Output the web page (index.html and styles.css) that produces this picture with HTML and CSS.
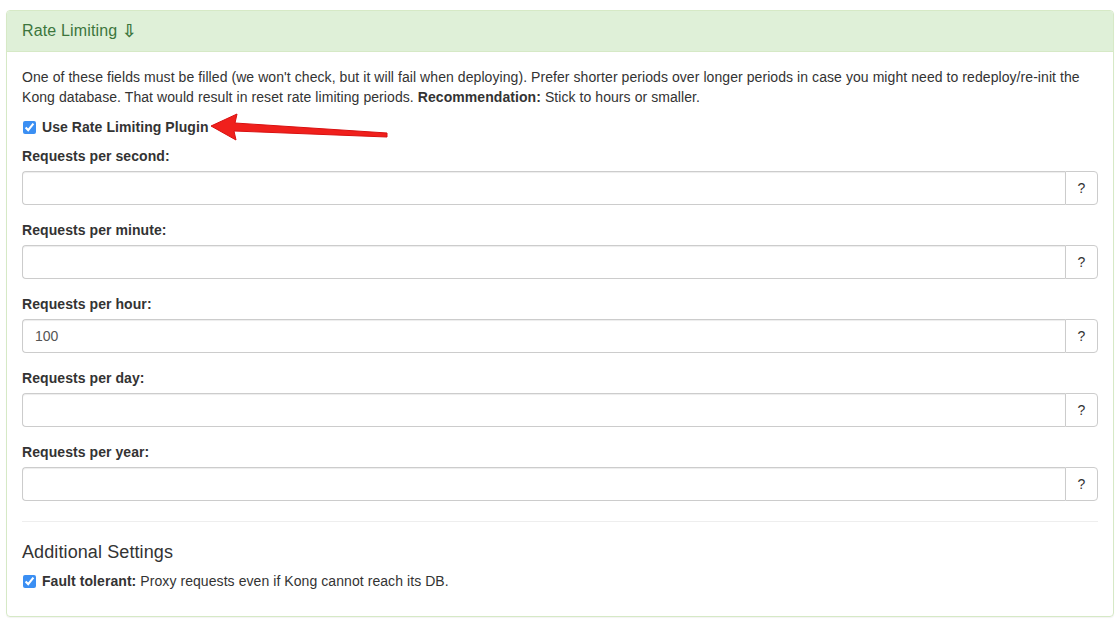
FILE: index.html
```html
<!DOCTYPE html>
<html>
<head>
<meta charset="utf-8">
<link rel="stylesheet" href="styles.css">
</head>
<body>
<div class="page">
  <div class="panel">
    <div class="panel-heading">Rate Limiting <span class="glyph">⇩</span></div>
    <div class="panel-body">
      <p class="intro">One of these fields must be filled (we won't check, but it will fail when deploying). Prefer shorter periods over longer periods in case you might need to redeploy/re-init the Kong database. That would result in reset rate limiting periods. <b>Recommendation:</b> Stick to hours or smaller.</p>
      <div class="checkbox first-check">
        <label><input type="checkbox" checked> <b>Use Rate Limiting Plugin</b></label>
        <svg class="arrow" width="200" height="40" viewBox="0 0 200 40">
          <path d="M2 14 L28 2 L26 11 L178 21 L178 25 L25 19 L27 28 Z" fill="#f0201c" stroke="#d81010" stroke-width="1" stroke-linejoin="round"/>
        </svg>
      </div>
      <div class="form-group">
        <label class="lbl">Requests per second:</label>
        <div class="input-group"><input class="form-control" type="text"><span class="addon">?</span></div>
      </div>
      <div class="form-group">
        <label class="lbl">Requests per minute:</label>
        <div class="input-group"><input class="form-control" type="text"><span class="addon">?</span></div>
      </div>
      <div class="form-group">
        <label class="lbl">Requests per hour:</label>
        <div class="input-group"><input class="form-control" type="text" value="100"><span class="addon">?</span></div>
      </div>
      <div class="form-group">
        <label class="lbl">Requests per day:</label>
        <div class="input-group"><input class="form-control" type="text"><span class="addon">?</span></div>
      </div>
      <div class="form-group">
        <label class="lbl">Requests per year:</label>
        <div class="input-group"><input class="form-control" type="text"><span class="addon">?</span></div>
      </div>
      <hr>
      <h4>Additional Settings</h4>
      <div class="checkbox last-check">
        <label><input type="checkbox" checked> <b>Fault tolerant:</b> Proxy requests even if Kong cannot reach its DB.</label>
      </div>
    </div>
  </div>
</div>
</body>
</html>
```

FILE: styles.css
```css
* { box-sizing: border-box; }
html, body { margin: 0; padding: 0; background: #fff; }
body {
  font-family: "Liberation Sans", Arial, sans-serif;
  font-size: 14px;
  line-height: 20px;
  color: #333;
  letter-spacing: 0.07px;
}
.page { padding: 10px 5px 6px 6px; }
.panel {
  border: 1px solid #d6e9c6;
  border-radius: 4px;
  box-shadow: 0 1px 1px rgba(0,0,0,0.05);
}
.panel-heading {
  background: #dff0d8;
  color: #3c763d;
  border-bottom: 1px solid #d6e9c6;
  border-radius: 3px 3px 0 0;
  padding: 10px 15px;
  font-size: 16px;
  line-height: 20px;
  height: 41px;
  letter-spacing: 0.15px;
}
.glyph { font-family: "DejaVu Sans", sans-serif; font-size: 18px; font-weight: bold; vertical-align: -1px; }
.panel-body { padding: 15px; }
.intro { margin: 0 0 10px; }
.checkbox { margin: 10px 0; position: relative; height: 20px; }
.first-check { margin-bottom: 9px; }
.checkbox label { display: block; cursor: pointer; }
.checkbox input {
  margin: 0 2px 0 1px;
  width: 13px; height: 13px;
  vertical-align: -2px;
  accent-color: #3b8ff3;
}
.arrow { position: absolute; left: 187px; top: -5px; }
.form-group { margin-bottom: 15px; }
.lbl { display: block; font-weight: bold; margin-bottom: 5px; height: 20px; }
.input-group { display: flex; height: 34px; }
.form-control {
  flex: 1;
  height: 34px;
  border: 1px solid #ccc;
  border-right: 0;
  border-radius: 4px 0 0 4px;
  padding: 6px 12px;
  font: inherit;
  color: #555;
  box-shadow: inset 0 1px 1px rgba(0,0,0,0.075);
  outline: none;
}
.addon {
  width: 33px;
  border: 1px solid #ccc;
  border-radius: 0 4px 4px 0;
  display: flex; align-items: center; justify-content: center;
  color: #333;
  background: #fff;
}
hr { border: 0; border-top: 1px solid #eee; margin: 20px 0 18px; }
h4 { font-size: 18px; margin: 0 0 7px; line-height: 24px; color: #333; font-weight: 500; letter-spacing: 0.1px; }
.last-check { margin: 0 0 10px; }
```
